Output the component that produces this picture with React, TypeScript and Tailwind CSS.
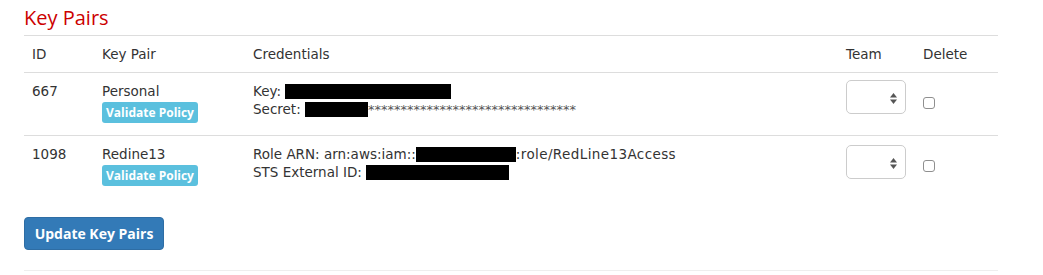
import React from 'react';

const Redact: React.FC<{ w: number }> = ({ w }) => (
  <span className="inline-block h-[15px] bg-black align-[-3px]" style={{ width: w }} />
);

const TeamSelect: React.FC = () => (
  <div className="relative h-[34px] w-[60px] rounded-[5px] border border-[#ccc] bg-white">
    <svg className="absolute right-[8px] top-[12px]" width="7" height="11" viewBox="0 0 7 11">
      <path d="M3.5 0 L7 4.5 L0 4.5 Z" fill="#555" />
      <path d="M3.5 11 L7 6.5 L0 6.5 Z" fill="#555" />
    </svg>
  </div>
);

const CheckBox: React.FC = () => (
  <div className="mt-[16px] h-[12px] w-[12px] rounded-[3px] border border-[#8f8f8f] bg-white" />
);

const ValidateButton: React.FC = () => (
  <div className="mt-[1px] w-[96px] rounded-[3px] bg-[#5bc0de] py-[2px] text-center text-[12px] font-bold leading-[17px] text-white [font-family:'Open_Sans',sans-serif]">
    Validate Policy
  </div>
);

const cols = 'grid grid-cols-[70px_151px_593px_77px_83px]';

export default function App() {
  return (
    <div className="bg-white px-6 text-[13.5px] text-[#333] [font-family:'DejaVu_Sans',sans-serif]" style={{ width: 1043, height: 275 }}>
      <div className="w-[974px]">
        <h2 className="h-[35px] pt-[5px] text-[20px] leading-[26px] text-[#cc0000] [font-family:'Open_Sans',sans-serif]">Key Pairs</h2>

        <div className={`${cols} h-[37px] border-t border-[#ddd] leading-[20px]`}>
          <div className="px-2 pt-[8px]">ID</div>
          <div className="px-2 pt-[8px]">Key Pair</div>
          <div className="px-2 pt-[8px]">Credentials</div>
          <div className="px-2 pt-[8px]">Team</div>
          <div className="px-2 pt-[8px]">Delete</div>
        </div>

        <div className={`${cols} h-[63px] border-t border-[#ddd] leading-[20px]`}>
          <div className="px-2 pt-[8px]">667</div>
          <div className="px-2 pt-[8px]">
            <div>Personal</div>
            <ValidateButton />
          </div>
          <div className="px-2 pt-[8px] leading-[18px]">
            <div className="pt-[1px]">
              Key: <Redact w={166} />
            </div>
            <div>
              Secret: <Redact w={63} />
              <span className="text-[13px] text-[#555]">********************************</span>
            </div>
          </div>
          <div className="px-2 pt-[7px]">
            <TeamSelect />
          </div>
          <div className="px-2 pt-[8px]">
            <CheckBox />
          </div>
        </div>

        <div className={`${cols} h-[63px] border-t border-[#ddd] leading-[20px]`}>
          <div className="px-2 pt-[8px]">1098</div>
          <div className="px-2 pt-[8px]">
            <div>Redine13</div>
            <ValidateButton />
          </div>
          <div className="px-2 pt-[8px] leading-[18px]">
            <div className="pt-[1px]">
              Role ARN: arn:aws:iam::<Redact w={100} />
              <span className="tracking-[0.4px]">:role/RedLine13Access</span>
            </div>
            <div>
              STS External ID: <Redact w={143} />
            </div>
          </div>
          <div className="px-2 pt-[9px]">
            <TeamSelect />
          </div>
          <div className="px-2 pt-[8px]">
            <CheckBox />
          </div>
        </div>

        <div className="pt-[19px]">
          <button className="h-[33px] w-[140px] rounded-[4px] border border-[#2e6da4] bg-[#337ab7] text-[14px] font-bold text-white [font-family:'Open_Sans',sans-serif]">
            Update Key Pairs
          </button>
        </div>

        <div className="mt-[20px] border-t border-[#eee]" />
      </div>
    </div>
  );
}
